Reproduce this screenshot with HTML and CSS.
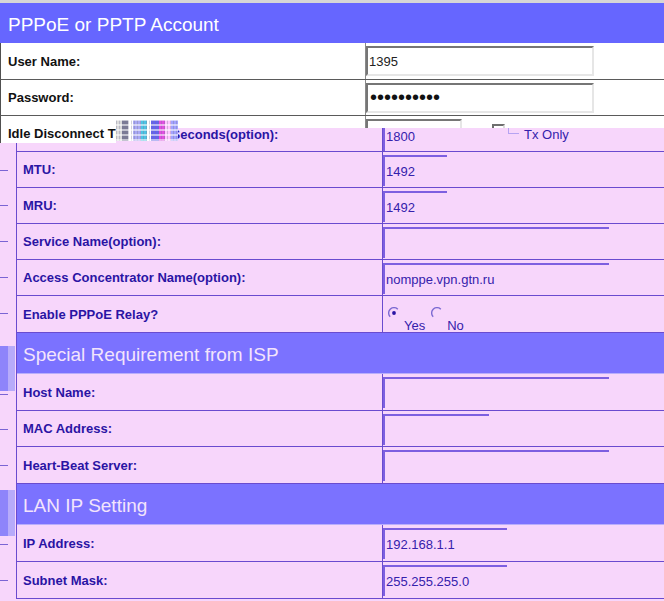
FILE: index.html
```html
<!DOCTYPE html>
<html lang="en">
<head>
    <meta charset="UTF-8">
    <meta name="viewport" content="width=device-width, initial-scale=1.0">
    <title>WAN Setting</title>
    <link rel="stylesheet" href="styles.css">
</head>
<body>
    <div class="topbar"></div>
    <div class="form">
        <div class="head">PPPoE or PPTP Account</div>
        <div class="row tall">
            <div class="label">User Name:</div>
            <div class="value"><input class="field wide" type="text" value="1395" readonly></div>
        </div>
        <div class="row">
            <div class="label">Password:</div>
            <div class="value"><input class="field wide pass" type="password" value="1234567890" readonly></div>
        </div>
        <div class="row">
            <div class="label">Idle Disconnect Time in Seconds(option):</div>
            <div class="value"><input class="field short" type="text" value="1800" readonly><span class="check"></span></div>
        </div>
    </div>

    <!-- second copy of the form, drawn shifted over the first one -->
    <div class="ghost">
        <span class="mark m1"></span>
        <span class="mark m2"></span>
        <span class="mark m3"></span>
        <span class="mark m4"></span>
        <span class="mark m5"></span>
        <span class="block b1"></span>
        <span class="block b1 light"></span>
        <span class="mark m6"></span>
        <span class="mark m7"></span>
        <span class="mark m8"></span>
        <span class="block b2"></span>
        <span class="block b2 light"></span>
        <span class="mark m9"></span>
        <span class="mark m10"></span>

        <div class="ghost-table">
            <div class="grow idle">
                <div class="glabel">Idle Disconnect Time in Seconds(option):</div>
                <div class="gvalue"><input class="gfield w96" type="text" value="1800" readonly><span class="gcheck"></span><span class="opt">Tx Only</span></div>
            </div>
            <div class="grow">
                <div class="glabel">MTU:</div>
                <div class="gvalue"><input class="gfield w64" type="text" value="1492" readonly></div>
            </div>
            <div class="grow">
                <div class="glabel">MRU:</div>
                <div class="gvalue"><input class="gfield w64" type="text" value="1492" readonly></div>
            </div>
            <div class="grow">
                <div class="glabel">Service Name(option):</div>
                <div class="gvalue"><input class="gfield w226" type="text" value="" readonly></div>
            </div>
            <div class="grow">
                <div class="glabel">Access Concentrator Name(option):</div>
                <div class="gvalue"><input class="gfield w226" type="text" value="nomppe.vpn.gtn.ru" readonly></div>
            </div>
            <div class="grow h37">
                <div class="glabel">Enable PPPoE Relay?</div>
                <div class="gvalue radios">
                    <label class="radio">
                        <svg width="12" height="12" viewBox="0 0 12 12"><path d="M2.2 9.8 A5.2 5.2 0 0 1 9.8 2.2" fill="none" stroke="#7d6ad2" stroke-width="1.4"/><circle cx="6" cy="6" r="1.9" fill="#2a14a4"/></svg>
                        <span>Yes</span>
                    </label>
                    <label class="radio">
                        <svg width="12" height="12" viewBox="0 0 12 12"><path d="M2.2 9.8 A5.2 5.2 0 0 1 9.8 2.2" fill="none" stroke="#7d6ad2" stroke-width="1.4"/></svg>
                        <span>No</span>
                    </label>
                </div>
            </div>
            <div class="ghead">Special Requirement from ISP</div>
            <div class="grow h37">
                <div class="glabel">Host Name:</div>
                <div class="gvalue"><input class="gfield w226" type="text" value="" readonly></div>
            </div>
            <div class="grow">
                <div class="glabel">MAC Address:</div>
                <div class="gvalue"><input class="gfield w106" type="text" value="" readonly></div>
            </div>
            <div class="grow h37">
                <div class="glabel">Heart-Beat Server:</div>
                <div class="gvalue"><input class="gfield w226" type="text" value="" readonly></div>
            </div>
            <div class="ghead">LAN IP Setting</div>
            <div class="grow h37">
                <div class="glabel">IP Address:</div>
                <div class="gvalue"><input class="gfield w124" type="text" value="192.168.1.1" readonly></div>
            </div>
            <div class="grow h37">
                <div class="glabel">Subnet Mask:</div>
                <div class="gvalue"><input class="gfield w124" type="text" value="255.255.255.0" readonly></div>
            </div>
        </div>
    </div>

    <div class="noise"></div>
</body>
</html>
```

FILE: styles.css
```css
* {
    box-sizing: border-box;
}

body {
    margin: 0;
    width: 664px;
    height: 601px;
    overflow: hidden;
    position: relative;
    background-color: #ffffff;
    font-family: "Liberation Sans", Arial, sans-serif;
}

.topbar {
    height: 3px;
    background-color: #d6d6d6;
}

/* first copy */
.head {
    height: 40px;
    background-color: #6666ff;
    color: #ffffff;
    font-size: 19px;
    padding: 3px 0 0 8px;
    display: flex;
    align-items: center;
}

.row {
    display: flex;
    height: 36px;
    border-left: 1px solid #505050;
    border-bottom: 1px solid #5a5a5a;
}

.row.tall {
    height: 37px;
}

.label {
    width: 365px;
    padding-left: 7px;
    border-right: 1px solid #8a8a8a;
    font-size: 13px;
    font-weight: bold;
    color: #111111;
    display: flex;
    align-items: center;
}

.value {
    flex: 1;
    display: flex;
    align-items: center;
}

.field {
    height: 30px;
    padding: 0 1px;
    border: 2px solid;
    border-color: #767676 #e6e6e6 #e6e6e6 #767676;
    background-color: #ffffff;
    font-family: "Liberation Sans", Arial, sans-serif;
    font-size: 13px;
    color: #222222;
    outline: none;
}

.field.wide {
    width: 228px;
}

.field.short {
    width: 96px;
    align-self: flex-start;
    margin-top: 3px;
}

.field.pass {
    font-size: 20px;
    padding-left: 2px;
    color: #111111;
}

.check {
    align-self: flex-start;
    margin-top: 8px;
    margin-left: 30px;
    width: 13px;
    height: 13px;
    border: 2px solid;
    border-color: #6e6e6e #dddddd #dddddd #6e6e6e;
}

/* shifted copy on top */
.ghost {
    position: absolute;
    left: 0;
    top: 128px;
    width: 664px;
    height: 473px;
    overflow: hidden;
    background-color: #f7d6fb;
    color: #2a14a4;
    clip-path: polygon(116px 0, 100% 0, 100% 100%, 0 100%, 0 15px, 116px 15px);
}

.ghost-table {
    margin-left: 16px;
    border-left: 1px solid #6a4bcf;
}

.grow {
    display: flex;
    height: 36px;
    border-bottom: 1px solid #6a4bcf;
}

.grow.h37 {
    height: 37px;
}

.grow.idle {
    margin-top: -11px;
    height: 35px;
}

.glabel {
    width: 366px;
    padding-left: 6px;
    border-right: 1px solid #6a4bcf;
    font-size: 13px;
    font-weight: bold;
    display: flex;
    align-items: center;
}

.gvalue {
    flex: 1;
    display: flex;
    align-items: flex-start;
}

.gfield {
    height: 31px;
    margin-top: 3px;
    padding: 0 1px;
    border: none;
    border-top: 2px solid #7d5fe0;
    border-left: 2px solid #7d5fe0;
    background: transparent;
    font-family: "Liberation Sans", Arial, sans-serif;
    font-size: 13px;
    color: #3521ac;
    outline: none;
}

.w64 { width: 64px; }
.w96 { width: 96px; }
.w106 { width: 106px; }
.w124 { width: 124px; }
.w226 { width: 226px; }

.gcheck {
    margin-top: 11px;
    margin-left: 29px;
    width: 11px;
    height: 6px;
    border-left: 1px solid #b6a3f2;
    border-bottom: 1px solid #b6a3f2;
}

.opt {
    margin-left: 5px;
    align-self: center;
    font-size: 13px;
    color: #3521ac;
}

.radios {
    padding-left: 5px;
}

.radio {
    display: flex;
    align-items: flex-start;
    margin-right: 6px;
    font-size: 13px;
    color: #3521ac;
}

.radio svg {
    margin-top: 11px;
}

.radio span {
    margin-top: 22px;
    margin-left: 4px;
}

.ghead {
    height: 41px;
    background-color: #7b72ff;
    border-bottom: 1px solid #b9aefb;
    color: #f3e4fc;
    font-size: 19px;
    padding: 3px 0 0 6px;
    display: flex;
    align-items: center;
}

/* bits of the copy underneath, seen at the left edge */
.mark {
    position: absolute;
    left: 0;
    width: 8px;
    height: 1px;
    background-color: #7a64d4;
}

.m1 { top: 42px; }
.m2 { top: 77px; }
.m3 { top: 113px; }
.m4 { top: 149px; }
.m5 { top: 185px; }
.m6 { top: 266px; }
.m7 { top: 301px; }
.m8 { top: 337px; }
.m9 { top: 416px; }
.m10 { top: 452px; }

.block {
    position: absolute;
    left: 0;
    width: 8px;
    background-color: #8e84fa;
}

.block.light {
    left: 8px;
    width: 7px;
    background-color: #b7abfa;
}

.b1 { top: 218px; height: 45px; }
.b2 { top: 362px; height: 46px; }

.noise {
    position: absolute;
    left: 116px;
    top: 120px;
    width: 62px;
    height: 21px;
    background:
        repeating-linear-gradient(0deg, rgba(255, 255, 255, 0.55) 0 2px, transparent 2px 5px),
        repeating-linear-gradient(90deg, rgba(120, 120, 150, 0.35) 0 1px, transparent 1px 3px),
        linear-gradient(90deg, #dcdcdc 0 6px, #7c7c96 6px 12px, #ffffff 12px 17px, #a9a9f5 17px 25px,
            #4cc4e4 25px 31px, #ffffff 31px 35px, #6262f0 35px 43px, #e24ce2 43px 49px,
            #ffc4ff 49px 55px, #a2a2ff 55px 62px);
}
```
